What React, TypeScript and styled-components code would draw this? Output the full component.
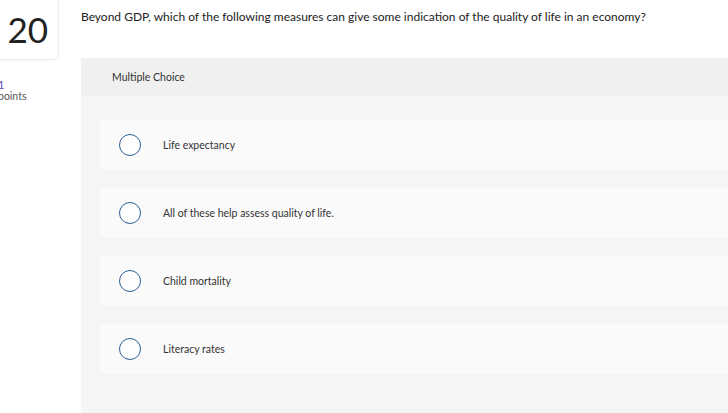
import React from 'react'
import styled, { createGlobalStyle } from 'styled-components'

const GlobalStyle = createGlobalStyle`
  html, body {
    margin: 0;
    padding: 0;
    background: #fff;
    font-family: Lato, "Open Sans", sans-serif;
    color: #333;
  }
`

const options = [
  'Life expectancy',
  'All of these help assess quality of life.',
  'Child mortality',
  'Literacy rates',
]

export default function App() {
  return (
    <>
      <GlobalStyle />
      <Page>
        <Sidebar>
          <NumberCard>20</NumberCard>
          <Points>
            <PointValue>1</PointValue>
            <PointLabel>points</PointLabel>
          </Points>
        </Sidebar>
        <Main>
          <Question>
            Beyond GDP, which of the following measures can give some indication of the quality of life in an economy?
          </Question>
          <Panel>
            <PanelHeader>Multiple Choice</PanelHeader>
            <OptionList>
              {options.map((text, i) => (
                <Option key={i}>
                  <Radio />
                  <OptionText>{text}</OptionText>
                </Option>
              ))}
            </OptionList>
          </Panel>
        </Main>
      </Page>
    </>
  )
}

const Page = styled.div`
  display: flex;
  flex-direction: row;
  height: 413px;
  overflow: hidden;
`

const Sidebar = styled.div`
  display: flex;
  flex-direction: column;
  flex: 0 0 89px;
  margin-left: -8px;
`

const NumberCard = styled.div`
  width: 67px;
  height: 64px;
  margin-top: -4px;
  box-sizing: border-box;
  border: 1px solid #ececec;
  border-radius: 4px;
  box-shadow: 0 1px 2px rgba(0, 0, 0, 0.04);
  display: flex;
  align-items: center;
  justify-content: flex-end;
  padding-right: 10px;
  padding-top: 2px;
  font-size: 35px;
  color: #222;
`

const Points = styled.div`
  display: flex;
  flex-direction: column;
  margin-top: 20px;
  margin-left: 6px;
`

const PointValue = styled.span`
  font-size: 11px;
  line-height: 10px;
  color: #5b4fc0;
`

const PointLabel = styled.span`
  font-size: 10.5px;
  line-height: 12px;
  color: #555;
`

const Main = styled.div`
  flex: 1;
  display: flex;
  flex-direction: column;
`

const Question = styled.div`
  font-size: 12px;
  line-height: 14px;
  color: #222;
  padding-top: 10px;
  height: 58px;
  box-sizing: border-box;
`

const Panel = styled.div`
  flex: 1;
  display: flex;
  flex-direction: column;
  background: #f5f5f5;
`

const PanelHeader = styled.div`
  height: 38px;
  background: #f0f0f0;
  display: flex;
  align-items: center;
  padding-left: 31px;
  font-size: 10.5px;
  color: #333;
`

const OptionList = styled.div`
  display: flex;
  flex-direction: column;
  gap: 18px;
  padding: 24px 0 0 19px;
`

const Option = styled.div`
  height: 50px;
  background: #fafafa;
  border-radius: 3px 0 0 3px;
  display: flex;
  align-items: center;
  padding-left: 19px;
`

const Radio = styled.span`
  width: 22px;
  height: 22px;
  box-sizing: border-box;
  border: 1.5px solid #2e5f96;
  border-radius: 50%;
  background: #fff;
  flex-shrink: 0;
`

const OptionText = styled.span`
  margin-left: 22px;
  font-size: 10.5px;
  color: #333;
`
